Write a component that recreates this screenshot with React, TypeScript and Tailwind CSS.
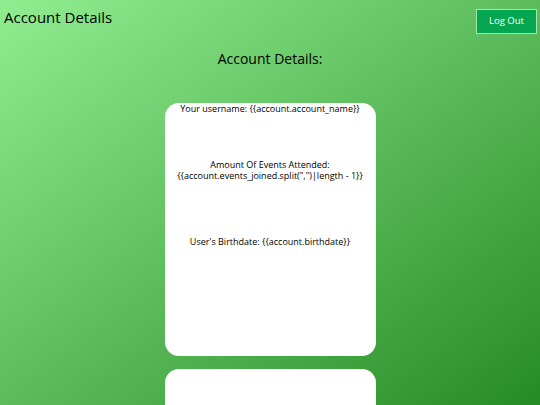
export default function App() {
  return (
    <div
      className="w-[540px] h-[405px] overflow-hidden bg-gradient-to-br from-[#90ee90] to-[#248c24] text-black"
      style={{ fontFamily: '"Open Sans", "Liberation Sans", sans-serif' }}
    >
      <div className="flex items-start justify-between pl-[4px] pr-[3px] pt-[9px]">
        <h1 className="text-[15px] leading-[17px] font-medium">Account Details</h1>
        <button className="w-[61px] h-[25px] bg-[#05a652] border border-[#a6e6a6] text-white text-[9.5px] flex items-center justify-center">
          Log Out
        </button>
      </div>
      <h2 className="mt-[17px] text-center text-[14px] leading-[16px] font-medium">Account Details:</h2>
      <div className="mt-[36px] flex flex-col items-center gap-[13px]">
        <div className="w-[211px] h-[253px] bg-white rounded-[14px] flex flex-col items-center text-center text-[9px] leading-[11px]">
          <p>Your username: {'{{account.account_name}}'}</p>
          <p className="mt-[45px]">
            Amount Of Events Attended:
            <br />
            {'{{account.events_joined.split(",")|length - 1}}'}
          </p>
          <p className="mt-[55px]">User's Birthdate: {'{{account.birthdate}}'}</p>
        </div>
        <div className="w-[211px] h-[253px] bg-white rounded-[14px]" />
      </div>
    </div>
  );
}
